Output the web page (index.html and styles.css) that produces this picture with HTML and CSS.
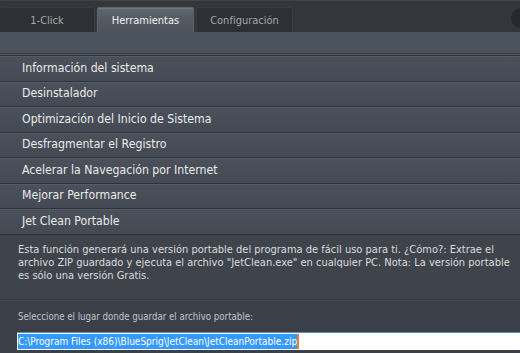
FILE: index.html
```html
<!DOCTYPE html>
<html lang="es">
<head>
    <meta charset="UTF-8">
    <title>JetClean - Herramientas</title>
    <link rel="stylesheet" href="styles.css">
</head>
<body>
    <div class="window">
        <div class="tab-strip">
            <div class="tab">1-Click</div>
            <div class="tab active">Herramientas</div>
            <div class="tab">Configuración</div>
            <div class="round-button"></div>
        </div>
        <div class="toolbar"></div>
        <ul class="tool-list">
            <li class="tool-item">Información del sistema</li>
            <li class="tool-item">Desinstalador</li>
            <li class="tool-item">Optimización del Inicio de Sistema</li>
            <li class="tool-item">Desfragmentar el Registro</li>
            <li class="tool-item">Acelerar la Navegación por Internet</li>
            <li class="tool-item">Mejorar Performance</li>
            <li class="tool-item">Jet Clean Portable</li>
        </ul>
        <div class="description">
            Esta función generará una versión portable del programa de fácil uso para ti. ¿Cómo?: Extrae el
            archivo ZIP guardado y ejecuta el archivo "JetClean.exe" en cualquier PC. Nota: La versión portable
            es sólo una versión Gratis.
        </div>
        <div class="save-panel">
            <p class="save-label">Seleccione el lugar donde guardar el archivo portable:</p>
            <div class="path-box"><span class="selected">C:\Program Files (x86)\BlueSprig\JetClean\JetCleanPortable.zip</span><span class="caret"></span></div>
        </div>
    </div>
</body>
</html>
```

FILE: styles.css
```css
body {
    margin: 0;
    background-color: #3b4048;
    font-family: "DejaVu Sans Condensed", "DejaVu Sans", sans-serif;
}

.window {
    width: 520px;
    height: 353px;
    overflow: hidden;
    display: flex;
    flex-direction: column;
}

.tab-strip {
    height: 32px;
    box-sizing: border-box;
    background-color: #33363b;
    border-top: 1px solid #3f434a;
    padding-top: 6px;
    display: flex;
    align-items: flex-end;
    gap: 2px;
    position: relative;
}

.tab {
    width: 97px;
    height: 25px;
    box-sizing: border-box;
    background-color: #2e3035;
    border: 1px solid #3a3d42;
    border-bottom: none;
    border-radius: 2px 2px 0 0;
    color: #a3a8ae;
    font-size: 11px;
    display: flex;
    align-items: center;
    justify-content: center;
}

.tab:first-child {
    width: 95px;
    border-left: none;
}

.tab.active {
    background: linear-gradient(#737a81 0px, #5c636b 2px, #535a62 12px, #4c545d 100%);
    border-color: #5e656d;
    color: #f2f2f2;
}

.round-button {
    position: absolute;
    right: -11px;
    top: 7px;
    width: 20px;
    height: 20px;
    border-radius: 50%;
    background-color: #27292d;
}

.toolbar {
    height: 21px;
    background-color: #4b535d;
    border-bottom: 1px solid #363a40;
    box-shadow: 0 1px 0 #545b64;
    margin-bottom: 1px;
}

.tool-list {
    list-style-type: none;
    margin: 0;
    padding: 0;
}

.tool-item {
    height: 25.5px;
    box-sizing: border-box;
    padding-left: 22px;
    padding-bottom: 1px;
    display: flex;
    align-items: center;
    background: linear-gradient(#4a515a, #434a53);
    border-top: 1px solid #2f3338;
    box-shadow: inset 0 1px 0 #555c65;
    color: #ebebeb;
    font-size: 12.2px;
}

.description {
    height: 66px;
    box-sizing: border-box;
    background-color: #3f444c;
    border-top: 1px solid #2f3338;
    border-bottom: 1px solid #33373d;
    padding: 8px 4px 0 18px;
    color: #dcdcdc;
    font-size: 11px;
    line-height: 13px;
}

.save-panel {
    flex: 1;
    background-color: #3b4048;
    border-top: 1px solid #474c54;
    padding: 10px 0 0 17px;
}

.save-label {
    margin: 0 0 10px 1px;
    color: #c2c4c8;
    font-size: 9.6px;
}

.path-box {
    height: 18px;
    box-sizing: border-box;
    background-color: #ffffff;
    border-top: 1px solid #5b8fc4;
    padding: 1px 0 0 1px;
    display: flex;
    align-items: flex-start;
    font-size: 10px;
}

.selected {
    background-color: #3399ff;
    color: #ffffff;
    line-height: 15px;
}

.caret {
    width: 2px;
    height: 15px;
    background-color: #e8822a;
}
```
